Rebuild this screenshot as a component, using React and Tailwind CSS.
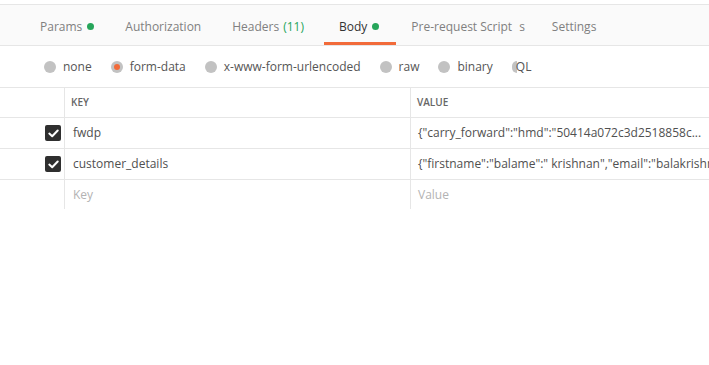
import React from 'react';

const font = { fontFamily: '"Open Sans", "Noto Sans", sans-serif' };

const Dot = () => <span className="inline-block w-[7px] h-[7px] rounded-full bg-[#26a55a] ml-[5px]" />;

const Tab = ({ children, active, className = '' }) => (
  <div className={`relative h-full flex items-center pt-[3px] ${className}`}>
    <span className={`flex items-center text-[12px] ${active ? 'text-[#333]' : 'text-[#808080]'}`}>{children}</span>
    {active && <span className="absolute left-[-15px] right-[-17px] bottom-0 h-[3px] bg-[#f26b3a]" />}
  </div>
);

const Radio = ({ label, checked }) => (
  <div className="flex items-center gap-[7px]">
    <span className="w-[12px] h-[12px] rounded-full bg-[#c2c2c2] flex items-center justify-center">
      {checked && <span className="w-[6px] h-[6px] rounded-full bg-[#f26b3a]" />}
    </span>
    <span className="text-[12px] text-[#555]">{label}</span>
  </div>
);

const Check = () => (
  <span className="w-[16px] h-[16px] rounded-[2px] bg-[#2f2f2f] flex items-center justify-center">
    <svg width="11" height="9" viewBox="0 0 11 9" fill="none">
      <path d="M1.3 4.6 L4.2 7.3 L9.7 1.5" stroke="#fff" strokeWidth="2" strokeLinecap="round" strokeLinejoin="round" />
    </svg>
  </span>
);

const rows = [
  { key: 'fwdp', value: '{"carry_forward":"hmd":"50414a072c3d2518858c...' },
  { key: 'customer_details', value: '{"firstname":"balame":" krishnan","email":"balakrishnan@' },
];

export default function App() {
  return (
    <div className="w-[709px] h-[365px] bg-white overflow-hidden" style={font}>
      <div className="h-[4px]" />
      {/* Tabs */}
      <div className="h-[42px] bg-[#fafafa] border-y border-[#e6e6e6] flex items-stretch pl-[40px]">
        <Tab className="mr-[31px]">Params<Dot /></Tab>
        <Tab className="mr-[31px]">Authorization</Tab>
        <Tab className="mr-[35px]">Headers<span className="text-[#26a55a] ml-[4px]">(11)</span></Tab>
        <Tab active className="mr-[32px]">Body<Dot /></Tab>
        <Tab className="mr-[27px]">Pre-request Script<span className="ml-[7px]">s</span></Tab>
        <Tab>Settings</Tab>
      </div>
      {/* Body type */}
      <div className="h-[42px] flex items-center pl-[44px] gap-[19px] border-b border-[#e6e6e6]">
        <Radio label="none" />
        <Radio label="form-data" checked />
        <Radio label="x-www-form-urlencoded" />
        <Radio label="raw" />
        <Radio label="binary" />
        <div className="flex items-center">
          <span className="w-[5px] h-[12px] rounded-l-full bg-[#c2c2c2]" />
          <span className="text-[12px] text-[#555] ml-[-1px]">QL</span>
        </div>
      </div>
      {/* Table */}
      <div className="flex h-[30px] border-b border-[#e6e6e6]">
        <div className="w-[65px] border-r border-[#e6e6e6]" />
        <div className="w-[346px] border-r border-[#e6e6e6] flex items-center pl-[6px] text-[10px] font-semibold text-[#666]">KEY</div>
        <div className="flex-1 flex items-center pl-[6px] text-[10px] font-semibold text-[#666]">VALUE</div>
      </div>
      {rows.map((r) => (
        <div key={r.key} className="flex h-[31px] border-b border-[#e6e6e6]">
          <div className="w-[65px] border-r border-[#e6e6e6] flex items-center justify-end pr-[3px]"><Check /></div>
          <div className="w-[346px] border-r border-[#e6e6e6] flex items-center pl-[8px] text-[12px] text-[#505050]">{r.key}</div>
          <div className="flex-1 min-w-0 flex items-center pl-[7px] text-[12px] text-[#505050] whitespace-nowrap overflow-hidden">{r.value}</div>
        </div>
      ))}
      <div className="flex h-[29px]">
        <div className="w-[65px] border-r border-[#e6e6e6]" />
        <div className="w-[346px] border-r border-[#e6e6e6] flex items-center pl-[8px] text-[12px] text-[#b3b3b3]">Key</div>
        <div className="flex-1 flex items-center pl-[7px] text-[12px] text-[#b3b3b3]">Value</div>
      </div>
    </div>
  );
}
